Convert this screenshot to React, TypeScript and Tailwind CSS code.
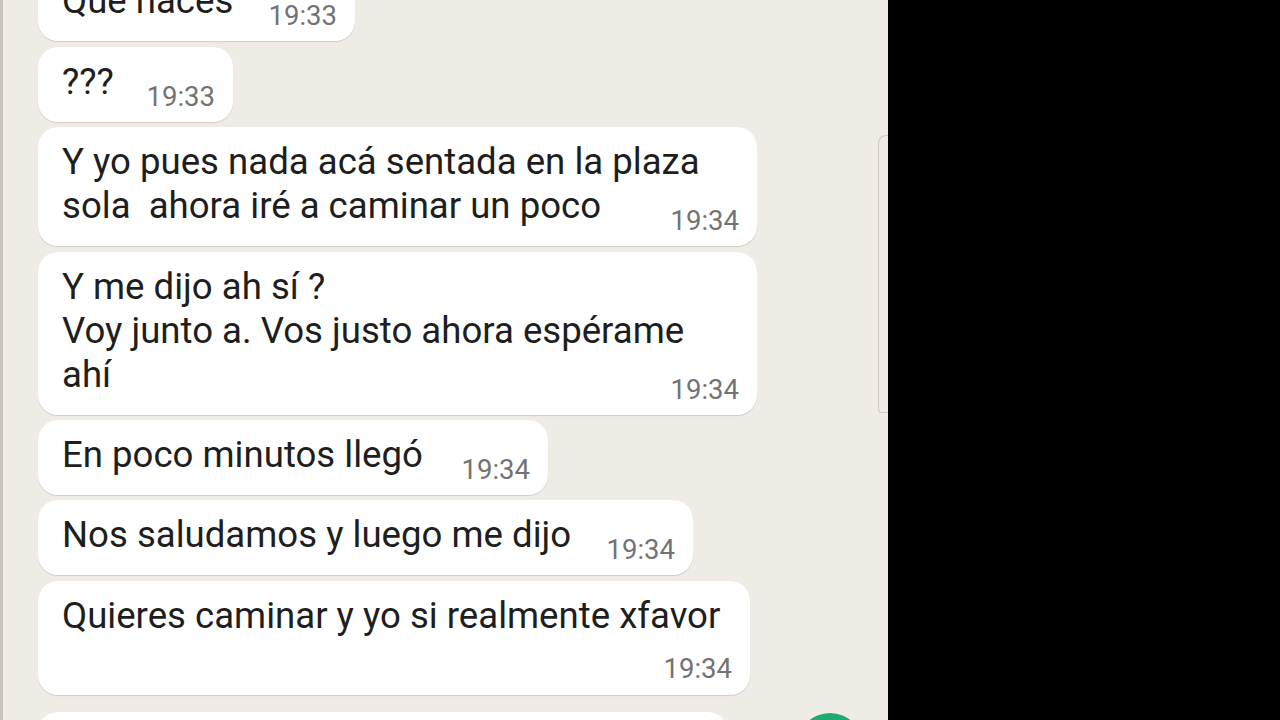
import React from 'react';

type Msg = {
  lines: string[];
  time: string;
  width: string;
  mt: string;
  timeBelow?: boolean;
};

const messages: Msg[] = [
  { lines: ['Que haces'], time: '19:33', width: 'w-[317px]', mt: '-mt-[34px]' },
  { lines: ['???'], time: '19:33', width: 'w-[195px]', mt: 'mt-[6px]' },
  {
    lines: ['Y yo pues nada acá sentada en la plaza', 'sola  ahora iré a caminar un poco'],
    time: '19:34',
    width: 'w-[719px]',
    mt: 'mt-[5px]'
  },
  {
    lines: ['Y me dijo ah sí ?', 'Voy junto a. Vos justo ahora espérame', 'ahí'],
    time: '19:34',
    width: 'w-[719px]',
    mt: 'mt-[6px]'
  },
  { lines: ['En poco minutos llegó'], time: '19:34', width: 'w-[510px]', mt: 'mt-[5px]' },
  { lines: ['Nos saludamos y luego me dijo'], time: '19:34', width: 'w-[655px]', mt: 'mt-[5px]' },
  {
    lines: ['Quieres caminar y yo si realmente xfavor'],
    time: '19:34',
    width: 'w-[712px]',
    mt: 'mt-[6px]',
    timeBelow: true
  },
  { lines: [' '], time: '', width: 'w-[690px]', mt: 'mt-[17px]' }
];

const Bubble: React.FC<{ msg: Msg }> = ({ msg }) => {
  const head = msg.lines.slice(0, -1);
  const last = msg.lines[msg.lines.length - 1];
  return (
    <div
      className={`${msg.width} ${msg.mt} shrink-0 bg-white rounded-[20px] pl-6 pr-[18px] pt-[13px] pb-[12px] shadow-[0_1px_1px_rgba(0,0,0,0.13)]`}
    >
      {head.map((line, i) => (
        <div key={i} className="text-[36.6px] leading-[44px] text-[#1e1e1e] whitespace-pre">
          {line}
        </div>
      ))}
      {msg.timeBelow ? (
        <>
          <div className="text-[36.6px] leading-[44px] text-[#1e1e1e] whitespace-pre">{last}</div>
          <div className="mt-[17px] text-right text-[27.5px] leading-[28px] text-[#737373]">{msg.time}</div>
        </>
      ) : (
        <div className="flex items-end justify-between">
          <span className="text-[36.6px] leading-[44px] mb-[6px] text-[#1e1e1e] whitespace-pre">{last}</span>
          <span className="text-[27.5px] leading-[28px] text-[#737373] translate-y-px">{msg.time}</span>
        </div>
      )}
    </div>
  );
};

const App: React.FC = () => {
  return (
    <div className="w-[1280px] h-[720px] flex overflow-hidden bg-black font-['Roboto',sans-serif]">
      <div className="relative w-[888px] h-full bg-[#efebe5] border-l-[3px] border-[#c9c5be] overflow-hidden">
        <div className="flex flex-col items-start pl-[35px]">
          {messages.map((msg, i) => (
            <Bubble key={i} msg={msg} />
          ))}
        </div>

        {/* scroll indicator */}
        <div className="absolute right-0 top-[135px] w-[10px] h-[278px] rounded-tl-[8px] rounded-bl-[4px] border border-r-0 border-[#cfcbc4]" />

        {/* floating button */}
        <div className="absolute left-[794px] top-[713px] w-[66px] h-[66px] rounded-full bg-[#1faa6f]" />
      </div>
      <div className="flex-1 bg-black" />
    </div>
  );
};

export default App;
